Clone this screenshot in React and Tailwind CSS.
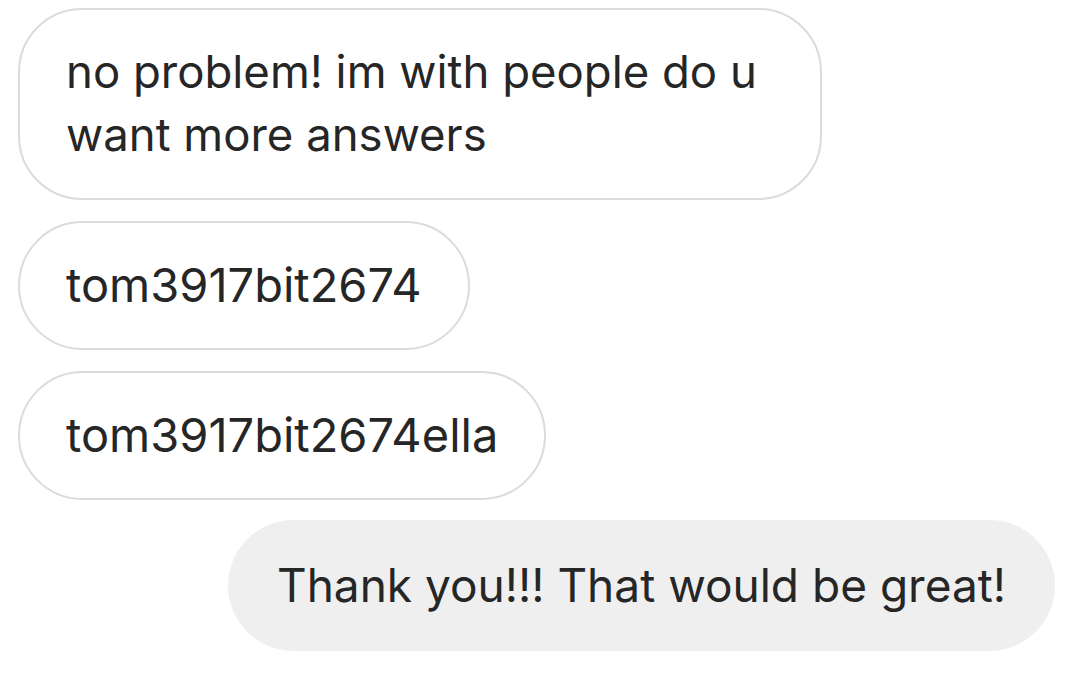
export default function App() {
    const font = { fontFamily: 'Inter, "Noto Sans", sans-serif' };

    return (
        <div className="w-[1090px] h-[685px] bg-white overflow-hidden" style={font}>
            <div className="flex flex-col gap-[21px] pt-[8px] pl-[18px] pr-[35px]">
                <div className="self-start w-[804px] h-[192px] rounded-[64px] border-2 border-[#dbdbdb] pl-[46px] pr-[40px] pb-[3px] flex items-center">
                    <p className="text-[45.5px] leading-[63px] text-[#262626]">
                        no problem! im with people do u want more answers
                    </p>
                </div>
                <div className="self-start h-[129px] rounded-full border-2 border-[#dbdbdb] px-[46px] flex items-center">
                    <p className="text-[47px] text-[#262626]">tom3917bit2674</p>
                </div>
                <div className="self-start h-[129px] rounded-full border-2 border-[#dbdbdb] px-[46px] flex items-center">
                    <p className="text-[47px] text-[#262626]">tom3917bit2674ella</p>
                </div>
                <div className="self-end w-[827px] h-[131px] -mt-[1px] rounded-full bg-[#efefef] flex items-center justify-center">
                    <p className="text-[46px] text-[#262626]">Thank you!!! That would be great!</p>
                </div>
            </div>
        </div>
    );
}
